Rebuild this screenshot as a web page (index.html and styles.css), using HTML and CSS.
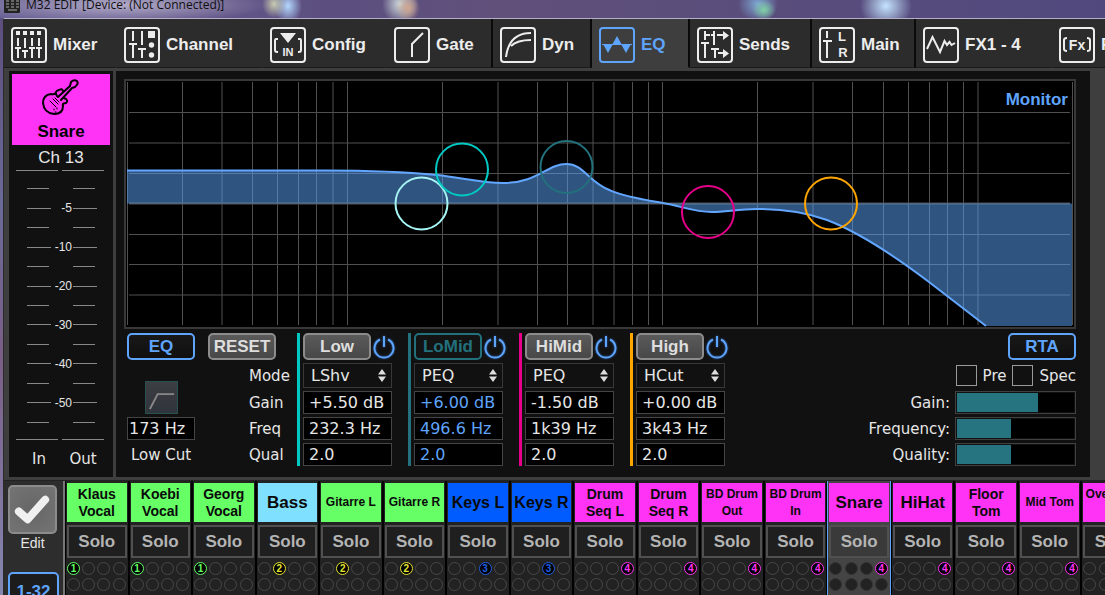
FILE: index.html
```html
<!DOCTYPE html>
<html lang="en">
<head>
    <meta charset="UTF-8">
    <meta name="viewport" content="width=device-width, initial-scale=1.0">
    <title>M32 EDIT</title>
    <link rel="stylesheet" href="styles.css">
</head>
<body>
    <header class="titlebar">
        <svg class="app-icon" viewBox="0 0 16 16" aria-hidden="true">
            <rect width="16" height="16" rx="1" fill="#222"/>
            <path d="M2 4h3M7 4h3M12 4h3M2 7h3M7 7h3M12 7h3M2 10h3M7 10h3M12 10h3M4 13h9" stroke="#aaa" stroke-width="1"/>
        </svg>
        <span class="title">M32 EDIT [Device: (Not Connected)]</span>
    </header>

    <div class="window">
        <nav class="tabs">
            <a href="#" class="tab">
                <svg class="icon" viewBox="2 2 32 32">
                    <path class="solid" d="M5 4h4v4H5zM12 4h4v4h-4zM19 4h4v4h-4zM26 4h4v4h-4z"/>
                    <path d="M7 11v8M14 11v10M21 11v8M28 11v8M4 21h6M7 21v10M11 24h6M14 24v7M18 21h6M21 21v10M25 21h6M28 21v10"/>
                </svg>
                Mixer
            </a>
            <a href="#" class="tab">
                <svg class="icon" viewBox="2 2 32 32">
                    <path d="M9 4v10M18 4v14M5 17h8M9 17v14M14 22h8M18 22v9"/>
                    <path class="solid" d="M24 4h7v7h-7z"/>
                    <circle class="solid" cx="27.5" cy="18" r="2.7"/>
                    <circle class="solid" cx="27.5" cy="28" r="2.7"/>
                </svg>
                Channel
            </a>
            <a href="#" class="tab">
                <svg class="icon" viewBox="2 2 32 32">
                    <path class="solid" d="M10 6h16l-8 10z"/>
                    <path d="M8 12H6Q5 12 5 14V23Q5 25 7 25H8M28 12H30Q31 12 31 14V23Q31 25 29 25H28"/>
                    <text x="18" y="29" font-size="11">IN</text>
                </svg>
                Config
            </a>
            <a href="#" class="tab divided">
                <svg class="icon" viewBox="2 2 32 32">
                    <path d="M18 30V17L29 6"/>
                </svg>
                Gate
            </a>
            <a href="#" class="tab divided">
                <svg class="icon" viewBox="2 2 32 32">
                    <path d="M6 30C8 14 17 6 31 6M11 19C16 14 23 13 31 13"/>
                </svg>
                Dyn
            </a>
            <a href="#" class="tab active">
                <svg class="icon" viewBox="2 2 32 32">
                    <path class="thin" d="M3 17.500H33"/>
                    <path class="solid" d="M4 17h10l-5 9zM13 18h10l-5 -9zM22 17h10l-5 9z"/>
                </svg>
                EQ
            </a>
            <a href="#" class="tab divided">
                <svg class="icon" viewBox="2 2 32 32">
                    <path d="M8 4v9M8 8h5M17 4v14M14 8h3M20 8h8M4 16h8M8 16v15M14 22h8M18 22v9M21 26h7"/>
                    <path class="solid" d="M26 4l6 4.500l-6 4.500zM26 22l6 4.500l-6 4.500z"/>
                </svg>
                Sends
            </a>
            <a href="#" class="tab divided">
                <svg class="icon" viewBox="2 2 32 32">
                    <path d="M8 4v7M4 14h9M8 14v17"/>
                    <text x="23" y="14" font-size="13">L</text>
                    <text x="24" y="30" font-size="13">R</text>
                </svg>
                Main
            </a>
            <a href="#" class="tab">
                <svg class="icon" viewBox="2 2 32 32">
                    <path d="M4 22L9.500 10L17 25L21.500 14L24 18L26.500 15L28.500 18L32 16"/>
                </svg>
                FX1 - 4
            </a>
            <a href="#" class="tab">
                <svg class="icon" viewBox="2 2 32 32">
                    <path d="M8 11Q5 11 5 13V22Q5 24 8 24M28 11Q31 11 31 13V22Q31 24 28 24"/>
                    <text x="18" y="23" font-size="14">Fx</text>
                </svg>
                FX5 - 8
            </a>
        </nav>

        <main class="workspace">
            <aside class="meter-panel">
                <div class="channel-tile">
                    <svg class="guitar" viewBox="0 0 38 38" aria-hidden="true">
                        <path d="M16 18L28 7L29 3Q32 0 35 2Q37 5 33 8L30 9L19 21M15 17Q12 12 17 11Q20 9 21 12M14 13Q13 16 9 15Q1 16 1 24Q2 34 12 35Q21 35 21 27Q20 24 24 24Q27 21 22 19"/>
                        <path class="strings" d="M11 20l5 5M8 22l6 6M13 19l4 4M12 30v1M15 29v1M13 33h1"/>
                    </svg>
                    <span>Snare</span>
                </div>
                <div class="channel-number">Ch 13</div>
                <div class="scale">
                    <div class="tick"></div>
                    <div class="tick major">-5</div>
                    <div class="tick"></div>
                    <div class="tick major">-10</div>
                    <div class="tick"></div>
                    <div class="tick major">-20</div>
                    <div class="tick"></div>
                    <div class="tick major">-30</div>
                    <div class="tick"></div>
                    <div class="tick major">-40</div>
                    <div class="tick"></div>
                    <div class="tick major">-50</div>
                    <div class="tick"></div>
                </div>
                <div class="meter-names"><span>In</span><span>Out</span></div>
            </aside>

            <section class="eq-panel">
                <div class="graph">
                    <svg viewBox="0 0 948 246" role="img" aria-label="EQ curve">
                        <path class="grid-line" d="M1.500 1V244M56.500 1V244M96 1V244M126.500 1V244M151.500 1V244M172.500 1V244M190.500 1V244M207 1V244M221.500 1V244M316.500 1V244M372 1V244M411.500 1V244M441.500 1V244M467 1V244M488 1V244M506.500 1V244M522.500 1V244M536.500 1V244M631.500 1V244M687 1V244M726.500 1V244M757.500 1V244M782.500 1V244M803.500 1V244M821.500 1V244M837.500 1V244M852 1V244M946.500 1V244"/>
                        <path class="grid-line" d="M3 31.500H944M3 62H944M3 92.500H944M3 153.500H944M3 183.500H944M3 214H944"/>
                        <path class="grid-line zero" d="M3 122.500H944"/>
                        <path class="area" d="M1 89.500H200C240 89.500 280 91 311 94C335 96.500 355 102 377 102C412 102 421 83 440.500 83C458 83 462 101 484 109.300C500 116 520 119 537 122C555 125 568 131 586 131C600 131 612 128 631 128C658 128 682 132 701 139C735 152 770 176 803 201C825 218 842 231 860 245H946V122.500H1Z"/>
                        <path class="curve" d="M1 89.500H200C240 89.500 280 91 311 94C335 96.500 355 102 377 102C412 102 421 83 440.500 83C458 83 462 101 484 109.300C500 116 520 119 537 122C555 125 568 131 586 131C600 131 612 128 631 128C658 128 682 132 701 139C735 152 770 176 803 201C825 218 842 231 860 245"/>
                        <circle class="handle" cx="295.500" cy="122.500" r="26" stroke="#a5f3f3"/>
                        <circle class="handle" cx="336" cy="88.500" r="26" stroke="#00c8c3"/>
                        <circle class="handle" cx="440.500" cy="86" r="26" stroke="#22717c"/>
                        <circle class="handle" cx="582" cy="131" r="26" stroke="#e6008a"/>
                        <circle class="handle" cx="705" cy="122.500" r="26" stroke="#ffa500"/>
                    </svg>
                    <span class="monitor">Monitor</span>
                </div>

                <div class="controls">
                    <div class="col low-cut">
                        <button class="btn on">EQ</button>
                        <button class="cut-shape" aria-label="Low cut on">
                            <svg viewBox="0 0 32 32"><path d="M4 28L12 12.500H29"/></svg>
                        </button>
                        <input class="field" id="lowcut" value="173 Hz">
                        <label for="lowcut">Low Cut</label>
                    </div>
                    <div class="col row-names">
                        <button class="btn">RESET</button>
                        <span>Mode</span>
                        <span>Gain</span>
                        <span>Freq</span>
                        <span>Qual</span>
                    </div>

                    <div class="col band low">
                        <div class="band-head">
                            <button class="btn">Low</button>
                            <button class="power" aria-label="Low on"><svg viewBox="0 0 24 24"><path d="M8 4.500A9.500 9.500 0 1 0 16 4.500M12 1V12"/></svg></button>
                        </div>
                        <div class="mode">
                            <select aria-label="Low mode"><option>LShv</option><option>PEQ</option><option>LCut</option></select>
                            <svg viewBox="0 0 8 14"><path d="M0 5.500L4 0L8 5.500zM0 7.500L4 13L8 7.500z"/></svg>
                        </div>
                        <input class="field" aria-label="Low gain" value="+5.50 dB">
                        <input class="field" aria-label="Low frequency" value="232.3 Hz">
                        <input class="field" aria-label="Low quality" value="2.0">
                    </div>

                    <div class="col band lomid">
                        <div class="band-head">
                            <button class="btn">LoMid</button>
                            <button class="power" aria-label="LoMid on"><svg viewBox="0 0 24 24"><path d="M8 4.500A9.500 9.500 0 1 0 16 4.500M12 1V12"/></svg></button>
                        </div>
                        <div class="mode">
                            <select aria-label="LoMid mode"><option>PEQ</option><option>VEQ</option></select>
                            <svg viewBox="0 0 8 14"><path d="M0 5.500L4 0L8 5.500zM0 7.500L4 13L8 7.500z"/></svg>
                        </div>
                        <input class="field" aria-label="LoMid gain" value="+6.00 dB">
                        <input class="field" aria-label="LoMid frequency" value="496.6 Hz">
                        <input class="field" aria-label="LoMid quality" value="2.0">
                    </div>

                    <div class="col band himid">
                        <div class="band-head">
                            <button class="btn">HiMid</button>
                            <button class="power" aria-label="HiMid on"><svg viewBox="0 0 24 24"><path d="M8 4.500A9.500 9.500 0 1 0 16 4.500M12 1V12"/></svg></button>
                        </div>
                        <div class="mode">
                            <select aria-label="HiMid mode"><option>PEQ</option><option>VEQ</option></select>
                            <svg viewBox="0 0 8 14"><path d="M0 5.500L4 0L8 5.500zM0 7.500L4 13L8 7.500z"/></svg>
                        </div>
                        <input class="field" aria-label="HiMid gain" value="-1.50 dB">
                        <input class="field" aria-label="HiMid frequency" value="1k39 Hz">
                        <input class="field" aria-label="HiMid quality" value="2.0">
                    </div>

                    <div class="col band high">
                        <div class="band-head">
                            <button class="btn">High</button>
                            <button class="power" aria-label="High on"><svg viewBox="0 0 24 24"><path d="M8 4.500A9.500 9.500 0 1 0 16 4.500M12 1V12"/></svg></button>
                        </div>
                        <div class="mode">
                            <select aria-label="High mode"><option>HCut</option><option>PEQ</option><option>HShv</option></select>
                            <svg viewBox="0 0 8 14"><path d="M0 5.500L4 0L8 5.500zM0 7.500L4 13L8 7.500z"/></svg>
                        </div>
                        <input class="field" aria-label="High gain" value="+0.00 dB">
                        <input class="field" aria-label="High frequency" value="3k43 Hz">
                        <input class="field" aria-label="High quality" value="2.0">
                    </div>

                    <div class="col rta">
                        <button class="btn on">RTA</button>
                        <div class="checks">
                            <input type="checkbox" id="pre"><label for="pre">Pre</label>
                            <input type="checkbox" id="spec"><label for="spec">Spec</label>
                        </div>
                        <div class="slider-row">
                            <label for="rtaGain">Gain:</label>
                            <input type="range" id="rtaGain" value="69" style="--value: 69%">
                        </div>
                        <div class="slider-row">
                            <label for="rtaFreq">Frequency:</label>
                            <input type="range" id="rtaFreq" value="46" style="--value: 46%">
                        </div>
                        <div class="slider-row">
                            <label for="rtaQual">Quality:</label>
                            <input type="range" id="rtaQual" value="46" style="--value: 46%">
                        </div>
                    </div>
                </div>
            </section>
        </main>

        <footer class="rack">
            <div class="rack-side">
                <button class="edit-btn" id="edit" aria-label="Edit">
                    <svg viewBox="0 0 44 44"><path d="M8 24L17 32L35 12"/></svg>
                </button>
                <label class="edit-label" for="edit">Edit</label>
                <button class="layer-btn">1-32</button>
            </div>
            <div class="strips" id="strips"></div>
        </footer>
    </div>

    <script src="strips.js"></script>
</body>
</html>
```

FILE: styles.css
```css
* {
    box-sizing: border-box;
}

body {
    margin: 0;
    height: 100vh;
    overflow: hidden;
    display: flex;
    flex-direction: column;
    background: linear-gradient(#5b4c7d, #6b6a98 35%, #7a5e86 60%, #8587b0);
    font-family: "Liberation Sans", Arial, sans-serif;
    font-size: 17px;
    color: #e6e6e6;
}

button, input, select {
    margin: 0;
    padding: 0;
    font: inherit;
    color: inherit;
}

/* title bar */
.titlebar {
    height: 18px;
    flex: none;
    display: flex;
    gap: 6px;
    padding-left: 4px;
    overflow: hidden;
    background:
        radial-gradient(ellipse 12px 14px at 274px 4px, #c8ccb0, transparent),
        radial-gradient(ellipse 14px 18px at 288px 6px, #b4d8ff, transparent),
        radial-gradient(ellipse 12px 14px at 408px 8px, #d0a890, transparent),
        radial-gradient(ellipse 18px 20px at 400px 4px, #cfdcdc, transparent),
        radial-gradient(ellipse 12px 10px at 764px 10px, #7fd0a4, transparent),
        radial-gradient(ellipse 20px 18px at 758px 4px, #7fa8d4, transparent),
        radial-gradient(ellipse 26px 24px at 886px 6px, #c4e4ff, transparent),
        radial-gradient(ellipse 150px 18px at 120px 5px, #b3abc8, transparent),
        linear-gradient(90deg, #6b6496, #5c4f80 30%, #60507a 45%, #51497e);
}

.app-icon {
    width: 16px;
    height: 16px;
    margin-top: -3px;
}

.title {
    font-family: "Open Sans", sans-serif;
    font-size: 12px;
    line-height: 10px;
    color: #101010;
}

.window {
    flex: 1;
    min-height: 0;
    margin-left: 3px;
    border-top: 1px solid #b5aecb;
    border-left: 1px solid #2a2a2a;
    background: #3e3e3e;
    overflow: hidden;
}

/* tabs */
.tabs {
    height: 49px;
    display: grid;
    grid-template-columns: 113px 146px 124px 106px 99px 98px 122px 104px 136px 146px;
    background: #2c2c2c;
}

.tab {
    display: flex;
    align-items: center;
    gap: 6px;
    padding: 3px 0 0 7px;
    font-weight: bold;
    color: #ededed;
    text-decoration: none;
    white-space: nowrap;
    border-bottom: 1px solid #1a1a1a;
    border-right: 2px solid transparent;
}

.tab.divided {
    border-right-color: #0a0a0a;
}

.tab.active {
    background: #3e3e3e;
    color: #5fa4fb;
    border-color: #3e3e3e;
    border-right-color: #0a0a0a;
}

.icon {
    width: 36px;
    height: 36px;
    flex: none;
    border: 2px solid currentColor;
    border-radius: 4px;
    fill: none;
    stroke: currentColor;
    stroke-width: 2;
}

.icon .solid {
    fill: currentColor;
    stroke: none;
}

.icon .thin {
    stroke-width: 1;
}

.icon text {
    fill: currentColor;
    stroke: none;
    text-anchor: middle;
}

/* channel meter */
.workspace {
    display: flex;
    gap: 3px;
    padding: 3px 15px 3px 5px;
}

.meter-panel {
    width: 104px;
    flex: none;
    padding: 3px 3px 8px;
    background: #111;
    display: flex;
    flex-direction: column;
}

.channel-tile {
    height: 71px;
    display: flex;
    flex-direction: column;
    align-items: center;
    justify-content: space-between;
    padding: 5px 0 3px;
    background: #ff33f5;
    color: #000;
    font-weight: bold;
    line-height: 20px;
}

.guitar {
    width: 38px;
    height: 38px;
    fill: none;
    stroke: #000;
    stroke-width: 2;
    stroke-linecap: round;
    stroke-linejoin: round;
}

.guitar .strings {
    stroke-width: 1;
}

.channel-number {
    line-height: 25px;
    text-align: center;
}

.scale {
    flex: 1;
    display: grid;
    grid-auto-rows: 1fr;
    padding: 9px 6px 8px 4px;
    background:
        linear-gradient(#888, #888) 4px 0 / 42px 1px no-repeat,
        linear-gradient(#888, #888) 50px 0 / 42px 1px no-repeat,
        linear-gradient(#888, #888) 4px 100% / 42px 1px no-repeat,
        linear-gradient(#888, #888) 50px 100% / 42px 1px no-repeat;
}

.tick {
    display: grid;
    grid-template-columns: 36px 21px;
    justify-content: start;
    align-items: center;
    column-gap: 10px;
    padding-left: 11px;
}

.tick::before,
.tick::after {
    content: "";
    width: 22px;
    height: 1px;
    background: #888;
}

.tick.major {
    grid-template-columns: 24px 20px 24px;
    column-gap: 1px;
    text-align: right;
    font-size: 12px;
}

.tick.major::before,
.tick.major::after {
    width: 24px;
}

.meter-names {
    display: grid;
    grid-template-columns: 1fr 1fr;
    padding: 9px 5px 0;
    line-height: 20px;
    text-align: center;
    font-family: "DejaVu Sans", Verdana, sans-serif;
    font-size: 15px;
}

/* eq graph */
.eq-panel {
    flex: 1;
    min-width: 0;
    padding: 8px 14px 11px 8px;
    background: #111;
}

.graph {
    position: relative;
    border: 2px solid #383838;
    background: #000;
}

.graph svg {
    display: block;
    width: 100%;
}

.grid-line {
    stroke: #505050;
    stroke-width: 1;
    fill: none;
}

.grid-line.zero {
    stroke-width: 2;
}

.area {
    fill: #5ca1f5;
    fill-opacity: 0.52;
}

.curve {
    fill: none;
    stroke: #62a6ff;
    stroke-width: 2;
}

.handle {
    fill: none;
    stroke-width: 2;
}

.monitor {
    position: absolute;
    top: 9px;
    right: 6px;
    line-height: 20px;
    font-weight: bold;
    color: #5fa4fb;
}

/* controls below the graph */
.controls {
    display: flex;
    margin-top: 4px;
    padding-left: 3px;
    font-family: "DejaVu Sans", Verdana, sans-serif;
    font-size: 15px;
}

.col {
    display: grid;
    grid-template-rows: 27px 25px 23px 23px 23px;
    row-gap: 3px;
    align-items: center;
}

.btn {
    width: 68px;
    height: 27px;
    border: 2px solid #8c8c8c;
    border-radius: 5px;
    background: linear-gradient(#5a5a5a, #484848);
    color: #dedede;
    font-family: "Liberation Sans", Arial, sans-serif;
    font-size: 17px;
    font-weight: bold;
    line-height: 20px;
}

.btn.on {
    border-color: #5fa4fb;
    background: linear-gradient(#181818, #101010);
    color: #5fa4fb;
}

.field {
    width: 100%;
    height: 23px;
    padding: 0 0 0 5px;
    border: 1px solid #454545;
    background: #000;
    font-size: 16px;
}

.low-cut {
    width: 68px;
    justify-items: center;
}

.low-cut .field {
    padding-left: 1px;
}

.cut-shape {
    grid-row: span 2;
    align-self: end;
    width: 33px;
    height: 33px;
    border: 1px solid #28504f;
    background: linear-gradient(#3b3e42, #30343c);
}

.cut-shape svg {
    display: block;
    fill: none;
    stroke: #888;
    stroke-width: 2;
}

.row-names {
    margin-left: 13px;
    width: 82px;
}

.row-names span {
    justify-self: end;
    width: 41px;
}

.band {
    width: 98px;
    margin-right: 13px;
    padding-left: 3px;
    border-left: 3px solid;
}

.row-names + .band {
    margin-left: 7px;
}

.band-head {
    display: flex;
    align-items: center;
    gap: 1px;
}

.band .btn {
    flex: none;
}

.band .field,
.band .mode {
    width: 89px;
}

.band.low { border-color: #00c8c3; }
.band.lomid { border-color: #22717c; }
.band.himid { border-color: #e6008a; }
.band.high { border-color: #ffa500; }

.lomid .btn {
    border-color: #22717c;
    background: #131313;
    color: #22717c;
}

.lomid .field {
    color: #5fa4fb;
}

.power {
    flex: none;
    width: 24px;
    height: 24px;
    border: none;
    background: none;
}

.power svg {
    display: block;
    fill: none;
    stroke: #5fa4fb;
    stroke-width: 2;
    filter: drop-shadow(0 0 1px #2b5fa8);
    overflow: visible;
}

.mode {
    position: relative;
}

.mode select {
    display: block;
    width: 100%;
    height: 25px;
    padding-left: 7px;
    appearance: none;
    border: 1px solid #383838;
    border-radius: 0;
    background: #111;
    font-size: 16px;
}

.mode svg {
    position: absolute;
    top: 6px;
    right: 6px;
    width: 8px;
    height: 14px;
    fill: #ddd;
    pointer-events: none;
}

.rta {
    margin-left: auto;
    justify-items: end;
}

.checks {
    display: flex;
    align-items: center;
    gap: 6px;
}

.checks input {
    appearance: none;
    width: 21px;
    height: 21px;
    border: 1px solid #999;
}

.slider-row {
    display: flex;
    align-items: center;
    gap: 5px;
}

.slider-row input {
    appearance: none;
    width: 121px;
    height: 23px;
    padding: 1px;
    border: 1px solid #404040;
    background: linear-gradient(90deg, #257480 var(--value), #000 var(--value)) content-box #000;
}

.slider-row input::-webkit-slider-thumb {
    appearance: none;
    width: 1px;
    height: 19px;
}

/* channel strips */
.rack {
    display: flex;
    height: 160px;
    border-top: 1px solid #222;
}

.rack-side {
    width: 61px;
    flex: none;
    padding: 4px 4px;
    background: #2d2d2d;
    border-right: 2px solid #777;
    display: flex;
    flex-direction: column;
    align-items: flex-start;
}

.edit-btn {
    width: 49px;
    height: 49px;
    padding: 1px;
    border: 2px solid #8c8c8c;
    border-radius: 5px;
    background: radial-gradient(#666, #747474);
}

.edit-btn svg {
    display: block;
    fill: none;
    stroke: #f0f0f0;
    stroke-width: 8;
    stroke-linecap: round;
    stroke-linejoin: round;
}

.edit-label {
    width: 49px;
    text-align: center;
    font-size: 14px;
    line-height: 18px;
}

.layer-btn {
    width: 51px;
    height: 40px;
    margin-top: 20px;
    border: 2px solid #5fa4fb;
    border-radius: 5px;
    background: #1c1c1c;
    color: #5fa4fb;
    font-weight: bold;
}

.strips {
    flex: 1;
    display: grid;
    grid-template-columns: repeat(17, minmax(0, 1fr));
    /* the bank runs on past the window edge */
    margin-right: -40px;
    background: #000;
}

.strip {
    display: flex;
    flex-direction: column;
    gap: 3px;
    margin: 0 1px;
    padding: 2px 1px 0;
    background: #222;
}

.strip.selected {
    margin: 0;
    background: #444;
    border: solid #5fa4fb;
    border-width: 0 1px;
}

.strip-name {
    height: 39px;
    display: flex;
    align-items: center;
    justify-content: center;
    text-align: center;
    font-weight: bold;
    white-space: pre;
    color: #0a0a0a;
}

.keys {
    font-size: 16px;
}

.two-line {
    font-size: 14px;
    line-height: 17px;
}

.small {
    font-size: 12px;
    line-height: 17px;
}

.green { background: #66ff66; }
.cyan { background: #80e0ff; }
.blue { background: #005cff; }
.magenta { background: #ff33f5; }

.solo {
    height: 33px;
    border: 2px solid #505050;
    background: #1f1f1f;
    color: #b4b4b4;
    font-weight: bold;
}

.selected .solo {
    background: #3a3a3a;
}

.groups {
    display: grid;
    grid-template-columns: repeat(4, 13px);
    justify-content: space-between;
    gap: 3px 0;
    padding: 1px 1px 0 0;
}

.dot {
    height: 13px;
    border: 1px solid #484848;
    border-radius: 50%;
    text-align: center;
    font-size: 10px;
    font-weight: bold;
    line-height: 11px;
}

.selected .dot {
    border-color: #333;
    background: #222;
}

.strip .dot.set {
    border-color: currentColor;
    background: #000;
}

.g1 { color: #66ff66; }
.g2 { color: #e6e633; }
.g3 { color: #1f5fe6; }
.g4 { color: #ff33f5; }
```

FILE: strips.js
```js
const strips = [
    { name: 'Klaus\nVocal', color: 'green', size: 'two-line', group: 1 },
    { name: 'Koebi\nVocal', color: 'green', size: 'two-line', group: 1 },
    { name: 'Georg\nVocal', color: 'green', size: 'two-line', group: 1 },
    { name: 'Bass', color: 'cyan', size: '', group: 2 },
    { name: 'Gitarre L', color: 'green', size: 'small', group: 2 },
    { name: 'Gitarre R', color: 'green', size: 'small', group: 2 },
    { name: 'Keys L', color: 'blue', size: 'keys', group: 3 },
    { name: 'Keys R', color: 'blue', size: 'keys', group: 3 },
    { name: 'Drum\nSeq L', color: 'magenta', size: 'two-line', group: 4 },
    { name: 'Drum\nSeq R', color: 'magenta', size: 'two-line', group: 4 },
    { name: 'BD Drum\nOut', color: 'magenta', size: 'small', group: 4 },
    { name: 'BD Drum\nIn', color: 'magenta', size: 'small', group: 4 },
    { name: 'Snare', color: 'magenta', size: '', group: 4, selected: true },
    { name: 'HiHat', color: 'magenta', size: '', group: 4 },
    { name: 'Floor\nTom', color: 'magenta', size: 'two-line', group: 4 },
    { name: 'Mid Tom', color: 'magenta', size: 'small', group: 4 },
    { name: 'Overhead\nL', color: 'magenta', size: 'small', group: 4 }
];

function dots(group) {
    let html = '';
    for (let i = 1; i <= 8; i++) {
        html += i === group
            ? `<span class="dot set g${i}">${i}</span>`
            : '<span class="dot"></span>';
    }
    return html;
}

document.getElementById('strips').innerHTML = strips.map(strip => `
    <div class="strip ${strip.selected ? 'selected' : ''}">
        <div class="strip-name ${strip.color} ${strip.size}">${strip.name}</div>
        <button class="solo">Solo</button>
        <div class="groups">${dots(strip.group)}</div>
    </div>
`).join('');
```
